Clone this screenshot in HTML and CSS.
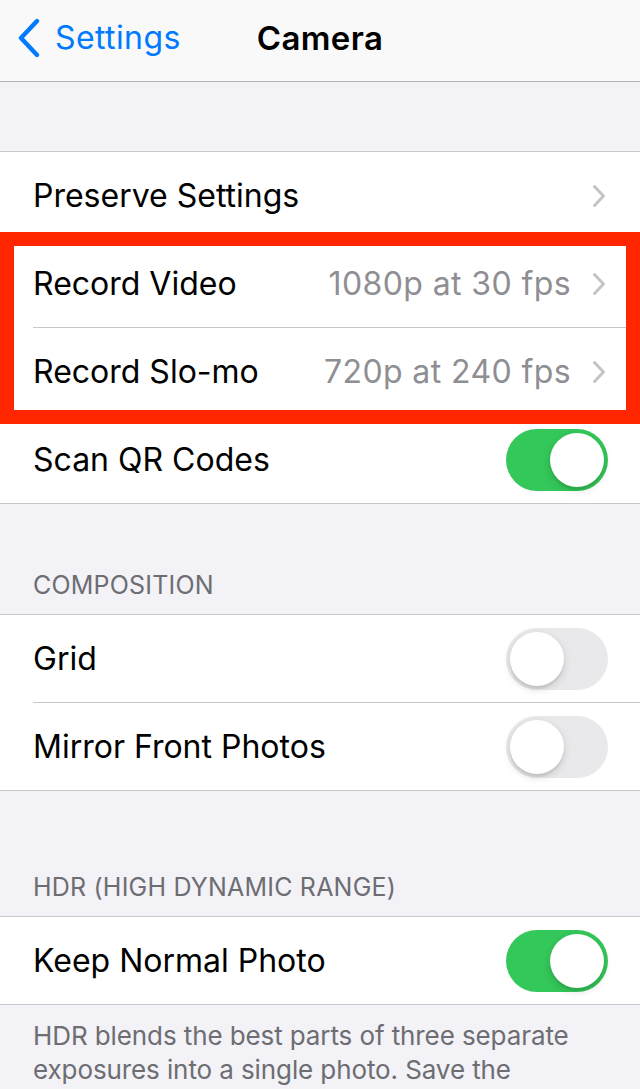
FILE: index.html
```html
<!DOCTYPE html>
<html>
<head>
<meta charset="utf-8">
<link rel="stylesheet" href="styles.css">
</head>
<body>
<div class="navbar">
  <div class="back">
    <svg class="back-icon" width="26" height="40" viewBox="0 0 26 40"><path d="M21 3 L5 20 L21 37" fill="none" stroke="#007aff" stroke-width="4.4" stroke-linecap="round" stroke-linejoin="round"/></svg>
    <span class="back-label">Settings</span>
  </div>
  <div class="title">Camera</div>
  <div></div>
</div>

<div class="top-gap"></div>

<div class="group group-main">
  <div class="row">
    <span class="label">Preserve Settings</span>
    <span class="accessory"><svg class="chev" width="14" height="24" viewBox="0 0 14 24"><path d="M2.5 2.5 L11.5 12 L2.5 21.5" fill="none" stroke="#c4c4c7" stroke-width="3" stroke-linecap="round" stroke-linejoin="round"/></svg></span>
  </div>
  <div class="row">
    <span class="label">Record Video</span>
    <span class="accessory"><span class="value">1080p at 30 fps</span><svg class="chev" width="14" height="24" viewBox="0 0 14 24"><path d="M2.5 2.5 L11.5 12 L2.5 21.5" fill="none" stroke="#c4c4c7" stroke-width="3" stroke-linecap="round" stroke-linejoin="round"/></svg></span>
  </div>
  <div class="row">
    <span class="label">Record Slo-mo</span>
    <span class="accessory"><span class="value">720p at 240 fps</span><svg class="chev" width="14" height="24" viewBox="0 0 14 24"><path d="M2.5 2.5 L11.5 12 L2.5 21.5" fill="none" stroke="#c4c4c7" stroke-width="3" stroke-linecap="round" stroke-linejoin="round"/></svg></span>
  </div>
  <div class="row">
    <span class="label">Scan QR Codes</span>
    <span class="toggle on"><span class="knob"></span></span>
  </div>
  <div class="highlight"></div>
</div>

<div class="section-header first">COMPOSITION</div>
<div class="group">
  <div class="row">
    <span class="label">Grid</span>
    <span class="toggle"><span class="knob"></span></span>
  </div>
  <div class="row">
    <span class="label">Mirror Front Photos</span>
    <span class="toggle"><span class="knob"></span></span>
  </div>
</div>

<div class="section-header second">HDR (HIGH DYNAMIC RANGE)</div>
<div class="group">
  <div class="row">
    <span class="label">Keep Normal Photo</span>
    <span class="toggle on"><span class="knob"></span></span>
  </div>
</div>
<div class="footer">HDR blends the best parts of three separate exposures into a single photo. Save the normally exposed photo in addition to the HDR version.</div>
</body>
</html>
```
FILE: styles.css
```css
html, body {
  margin: 0;
  padding: 0;
}
body {
  width: 640px;
  height: 1089px;
  overflow: hidden;
  background: #f2f2f7;
  font-family: "Inter", "Roboto", sans-serif;
  -webkit-font-smoothing: antialiased;
}
.navbar {
  height: 75px;
  padding-bottom: 6px;
  background: #f9f9f9;
  border-bottom: 1px solid #b4b4b6;
  display: grid;
  grid-template-columns: 1fr auto 1fr;
  align-items: center;
}
.back {
  display: flex;
  align-items: center;
  padding-left: 16px;
  gap: 13px;
}
.back-icon {
  display: block;
  margin-top: 1px;
}
.back-label {
  color: #007aff;
  font-size: 32px;
  letter-spacing: 0.4px;
}
.title {
  font-size: 33px;
  font-weight: 600;
  color: #000;
  letter-spacing: 0.4px;
}
.top-gap {
  height: 69px;
}
.group {
  background: #fff;
  border-top: 1px solid #c8c7cc;
  border-bottom: 1px solid #c8c7cc;
}
.group-main {
  position: relative;
}
.row {
  height: 87px;
  display: flex;
  align-items: center;
  justify-content: space-between;
  padding: 0 32px 0 33px;
  position: relative;
}
.row + .row {
  border-top: 1px solid #c8c7cc;
  margin-left: 33px;
  padding-left: 0;
}
.label {
  font-size: 32px;
  color: #000;
  letter-spacing: 0;
}
.accessory {
  display: flex;
  align-items: center;
  gap: 21px;
}
.value {
  font-size: 32px;
  color: #8e8e93;
  letter-spacing: 0.4px;
}
.chev {
  display: block;
  margin-right: 2px;
}
.toggle {
  width: 102px;
  height: 62px;
  border-radius: 31px;
  background: #e9e9eb;
  position: relative;
  flex: none;
}
.toggle .knob {
  position: absolute;
  top: 4px;
  left: 4px;
  width: 54px;
  height: 54px;
  border-radius: 50%;
  background: #fff;
  box-shadow: 0 3px 8px rgba(0,0,0,0.15), 0 3px 1px rgba(0,0,0,0.06);
}
.toggle.on {
  background: #34c759;
}
.toggle.on .knob {
  left: auto;
  right: 4px;
}
.highlight {
  position: absolute;
  left: 0;
  right: 0;
  top: 80px;
  height: 164px;
  border: 14px solid #ff2600;
}
.section-header {
  font-size: 25px;
  color: #6d6d72;
  line-height: 32px;
  padding: 0 33px 13px;
  letter-spacing: 0.2px;
}
.section-header.first {
  padding-top: 65px;
}
.section-header.second {
  padding-top: 80px;
}
.footer {
  font-size: 26px;
  color: #6d6d72;
  line-height: 34px;
  letter-spacing: -0.1px;
  padding: 14px 33px 0;
}
```
